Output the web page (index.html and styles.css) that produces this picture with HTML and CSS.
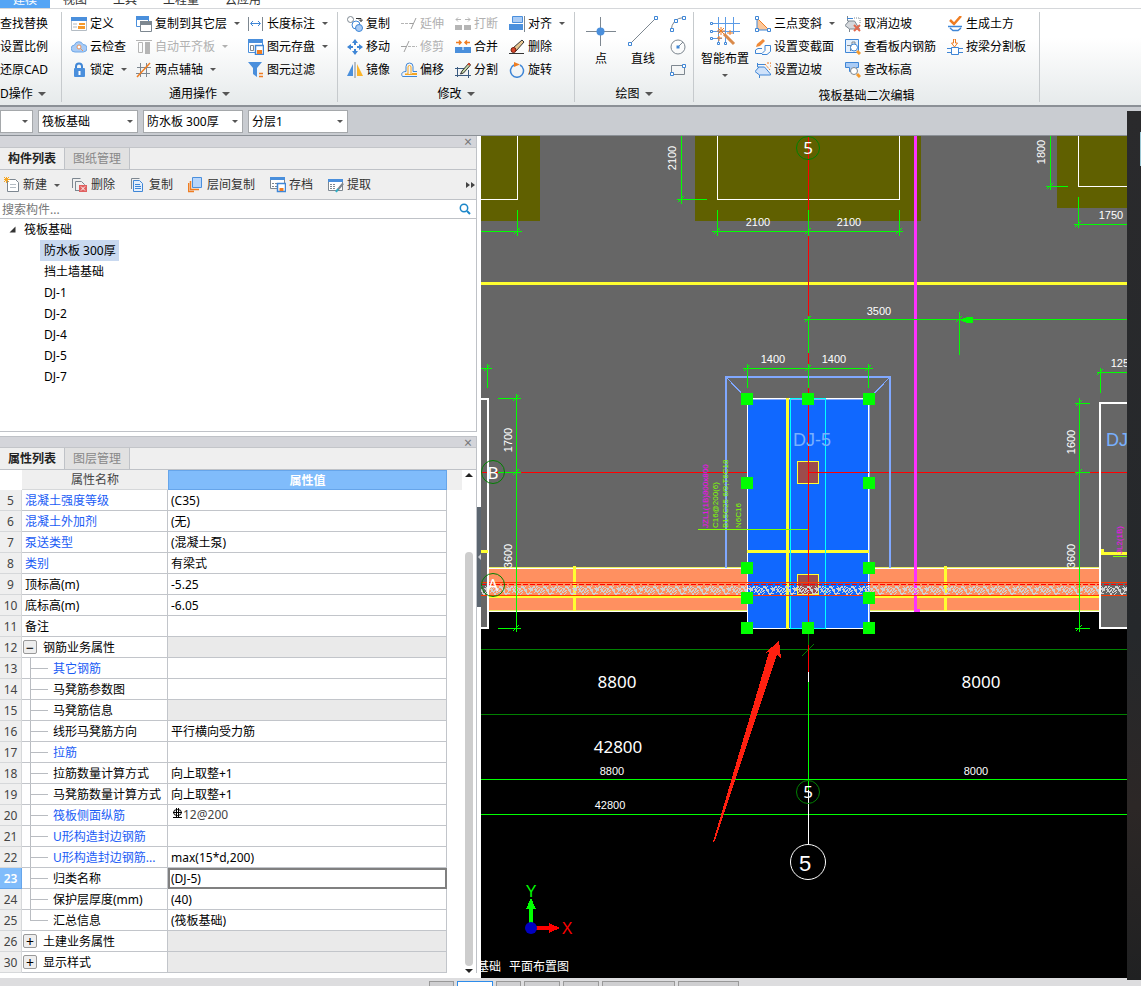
FILE: index.html
```html
<!DOCTYPE html>
<html lang="zh-CN">
<head>
  <meta charset="UTF-8">
  <title>筏板基础 - 建模</title>
  <link rel="stylesheet" href="styles.css">
</head>
<body>

<nav class="menu">
  <a href="#" class="active">建模</a>
  <a href="#">视图</a>
  <a href="#">工具</a>
  <a href="#">工程量</a>
  <a href="#">云应用</a>
</nav>

<header class="ribbon">
  <section class="group cut">
    <div class="tools">
      <div class="col">
        <button>查找替换</button>
        <button>设置比例</button>
        <button>还原CAD</button>
      </div>
    </div>
    <button class="group-name">D操作<i class="caret big"></i></button>
  </section>

  <section class="group common">
    <div class="tools">
      <div class="col">
        <button><svg class="icon" viewBox="0 0 16 16"><path d="M.5 1.500h15v13h-15z" fill="#fff" stroke="#b4bcc4"/><path d="M0 1h16v4H0z" fill="#4a8fdc"/><path d="M2 8h4M2 11h4" stroke="#b0b8c0"/><path d="M8 7h6v2H8zM7 10h7v3H7z" fill="#f59a2c"/></svg>定义</button>
        <button><svg class="icon" viewBox="0 0 16 16"><path d="M4 13a3.500 3.500 0 0 1-.5-7A4.500 4.500 0 0 1 12 5.500 3.700 3.700 0 0 1 12.500 13z" fill="#a9cbf5" stroke="#6fa8e8"/><circle cx="8" cy="8" r="2" fill="#fff" stroke="#e8925b"/><path d="M9.500 9.500l2.500 2.500" stroke="#e8925b"/></svg>云检查</button>
        <button><svg class="icon" viewBox="0 0 16 16"><path d="M5 7V4.500a3 3 0 0 1 6 0V7" fill="none" stroke="#3f86d6" stroke-width="2"/><rect x="3" y="6" width="11" height="9" rx="1" fill="#4a8fdc"/><path d="M8.500 9v4" stroke="#fff" stroke-width="2"/></svg>锁定<i class="caret"></i></button>
      </div>
      <div class="col">
        <button><svg class="icon" viewBox="0 0 16 16"><path d="M.5 1.500h12v9H.5z" fill="#fff" stroke="#4a8fdc"/><path d="M0 0h13v4H0z" fill="#4a8fdc"/><path d="M4.500 6.500h11v9h-11z" fill="#fff" stroke="#7d8790"/><path d="M4 5h12v4H4z" fill="#7d8790"/></svg>复制到其它层<i class="caret"></i></button>
        <button disabled><svg class="icon" viewBox="0 0 16 16"><path d="M0 1.500h16" stroke="#b5b5b5"/><path d="M2.500 3.500h4v10h-4z" fill="none" stroke="#b5b5b5"/><path d="M9 3h5v12H9z" fill="#b5b5b5"/></svg>自动平齐板<i class="caret"></i></button>
        <button><svg class="icon" viewBox="0 0 16 16"><path d="M4.500 1v14M10.500 1v14M1 5.500h14M0 11.500h14" stroke="#7d8790"/><path d="M1 15L14 1" stroke="#ef7d22" stroke-width="1.500"/></svg>两点辅轴<i class="caret"></i></button>
      </div>
      <div class="col">
        <button><svg class="icon" viewBox="0 0 16 16"><path d="M.5 1v14M14.500 1v14" stroke="#7d8790"/><path d="M3 7.500h9M5 5L2.500 7.500 5 10M10 5l2.500 2.500L10 10" fill="none" stroke="#3f86d6"/></svg>长度标注<i class="caret"></i></button>
        <button><svg class="icon" viewBox="0 0 16 16"><path d="M.5 1.500h14v12H.5z" fill="#fff" stroke="#4a8fdc"/><path d="M0 0h15v4H0z" fill="#4a8fdc"/><path d="M2.500 6.500h3v5h-3z" fill="none" stroke="#7d8790"/><path d="M7.500 6.500h8v9h-8z" fill="#fff" stroke="#3f86d6" stroke-width="1.500"/><path d="M9 11h5v4H9z" fill="#ef7d22"/></svg>图元存盘<i class="caret"></i></button>
        <button><svg class="icon" viewBox="0 0 16 16"><path d="M0 0h14L9 6v9l-4-3V6z" fill="#4a8fdc"/><path d="M11 11.500h4M11 14.500h4" stroke="#ef7d22" stroke-width="1.500"/></svg>图元过滤</button>
      </div>
    </div>
    <button class="group-name">通用操作<i class="caret big"></i></button>
  </section>

  <section class="group modify">
    <div class="tools">
      <div class="col">
        <button><svg class="icon" viewBox="0 0 16 16"><circle cx="3.500" cy="3.500" r="3" fill="none" stroke="#7d8790"/><circle cx="9" cy="9" r="4" fill="#fff" stroke="#3f86d6"/><circle cx="12" cy="12" r="3.500" fill="#a9cbf5" stroke="#3f86d6"/><path d="M9 2.500h5v3M12 3.500l2 2 2-2" fill="none" stroke="#333"/></svg>复制</button>
        <button><svg class="icon" viewBox="0 0 16 16"><path d="M8 0l3 4H9v2H7V4H5zM8 16l3-4H9v-2H7v2H5zM0 8l4-3v2h2v2H4v2zM16 8l-4-3v2h-2v2h2v2z" fill="#3f86d6"/></svg>移动</button>
        <button><svg class="icon" viewBox="0 0 16 16"><path d="M6 2v12H0z" fill="#4a8fdc"/><path d="M10 2v12h6z" fill="#fbb52a"/><path d="M8 0v16" stroke="#7d8790"/></svg>镜像</button>
      </div>
      <div class="col">
        <button disabled><svg class="icon" viewBox="0 0 16 16"><path d="M0 7.500h9" stroke="#b5b5b5" stroke-dasharray="3 1"/><path d="M9 7.500h3M10 13l5-11" stroke="#a0a0a0"/></svg>延伸</button>
        <button disabled><svg class="icon" viewBox="0 0 16 16"><path d="M0 7.500h5M3 13L8 2" stroke="#a0a0a0"/><path d="M7 7.500h9" stroke="#b5b5b5" stroke-dasharray="3 1"/></svg>修剪</button>
        <button><svg class="icon" viewBox="0 0 16 16"><path d="M16 14.500H1.500c-2-3 0-5 3.500-5v-5a3.500 3.500 0 0 1 7 0v5h4" fill="none" stroke="#3f86d6"/><path d="M16 12.500H4M16 11.500h-5M4 12h3V5a1.500 1.500 0 0 1 3 0v7" fill="none" stroke="#f5a623"/></svg>偏移</button>
      </div>
      <div class="col">
        <button disabled><svg class="icon" viewBox="0 0 16 16"><path d="M0 9h7v5H0zM9 9h7v5H9z" fill="#b5b5b5"/><path d="M1 3.500h5M3 1.500l-2 2 2 2M10 3.500h5M13 1.500l2 2-2 2" fill="none" stroke="#b5b5b5"/></svg>打断</button>
        <button><svg class="icon" viewBox="0 0 16 16"><path d="M0 8h16v6H0z" fill="#4a8fdc"/><path d="M8 8v3" stroke="#fff"/><path d="M1 3.500h5M4 1.500l2 2-2 2M15 3.500h-5M12 1.500l-2 2 2 2" fill="none" stroke="#ef7d22" stroke-width="1.500"/></svg>合并</button>
        <button><svg class="icon" viewBox="0 0 16 16"><path d="M0 6.500h10M2.500 5v10M0 13.500h16M13.500 8v8" fill="none" stroke="#3b5b80"/><path d="M14 1l1.500 2-7 8-3 1 1.500-3z" fill="#c5d9a8" stroke="#333"/><path d="M13 1.500L15 3" stroke="#d9482b" stroke-width="2"/></svg>分割</button>
      </div>
      <div class="col">
        <button><svg class="icon" viewBox="0 0 16 16"><path d="M3.500.500h10v6h-10z" fill="#a9cbf5" stroke="#4a8fdc"/><path d="M0 8h14v6H0z" fill="#4a8fdc"/><path d="M15.500 0v16" stroke="#7d8790"/></svg>对齐<i class="caret"></i></button>
        <button><svg class="icon" viewBox="0 0 16 16"><path d="M0 14.500h15" stroke="#333"/><path d="M13 1l2 2-8 9-3-3z" fill="#e8c690" stroke="#333"/><circle cx="4.500" cy="11" r="2.500" fill="#d9482b" stroke="#702010"/></svg>删除</button>
        <button><svg class="icon" viewBox="0 0 16 16"><path d="M5 3a6.500 6.500 0 1 0 6 0" fill="none" stroke="#3f86d6" stroke-width="1.500"/><path d="M5 0l6 2.500L5 5z" fill="#ef7d22"/></svg>旋转</button>
      </div>
    </div>
    <button class="group-name">修改<i class="caret big"></i></button>
  </section>

  <section class="group draw">
    <div class="tools">
      <button class="large"><svg class="icon-lg" viewBox="0 0 30 30"><path d="M14.500 1v29M0 15.500h30" stroke="#7d8790"/><circle cx="14.500" cy="15.500" r="4" fill="#4a8fdc"/></svg>点</button>
      <button class="large"><svg class="icon-lg" viewBox="0 0 30 30"><path d="M2 28L28 2" stroke="#7d8790"/><path d="M.500 26.500h3v3h-3zM26.500.500h3v3h-3z" fill="#fff" stroke="#3f86d6"/></svg>直线</button>
      <div class="col">
        <button aria-label="弧"><svg class="icon" viewBox="0 0 16 16"><path d="M1 15Q2 2 14 1.500" fill="none" stroke="#7d8790"/><path d="M.500 12.500h3v3h-3zM4.500 3.500h3v3h-3zM12.500.500h3v3h-3z" fill="#fff" stroke="#3f86d6"/></svg></button>
        <button aria-label="圆"><svg class="icon" viewBox="0 0 16 16"><circle cx="8" cy="8" r="7" fill="none" stroke="#7d8790"/><path d="M8 8l5-5" stroke="#7d8790"/><path d="M6.500 6.500h3v3h-3z" fill="#3f86d6"/></svg></button>
        <button aria-label="矩形"><svg class="icon" viewBox="0 0 16 16"><path d="M1.500 3.500h13v9h-13z" fill="none" stroke="#7d8790"/><path d="M.500 10.500h3v3h-3zM12.500 2.500h3v3h-3z" fill="#fff" stroke="#3f86d6"/></svg></button>
      </div>
    </div>
    <button class="group-name">绘图<i class="caret big"></i></button>
  </section>

  <section class="group raft">
    <div class="tools">
      <button class="large"><svg class="icon-lg" viewBox="0 0 30 30"><path d="M8.500 1v26M15.500 1v26M23.500 1v17M2 7.500h28M2 15.500h28M2 22.500h10" stroke="#5b9be6"/><path d="M.500 6.500h2v2h-2zM.500 14.500h2v2h-2zM.500 21.500h2v2h-2zM7.500 26.500h2v2h-2zM14.500 26.500h2v2h-2z" fill="#fff" stroke="#3f86d6"/><path d="M14 18l10 10" stroke="#d98a4a" stroke-width="3"/><path d="M11 11v8M7 15h8M8 12l6 6M14 12l-6 6M20 14v5M17 17h6M9 20v5M7 22h5" stroke="#ef7d22"/></svg>智能布置<i class="caret"></i></button>
      <div class="col">
        <button><svg class="icon" viewBox="0 0 16 16"><path d="M2 2v12h12z" fill="#fbc79a"/><path d="M2 2v12h12" fill="none" stroke="#3f86d6"/><path d="M2 2l12 12" stroke="#ef7d22"/><path d="M.500.500h3v3h-3zM.500 12.500h3v3h-3zM12.500 12.500h3v3h-3z" fill="#fff" stroke="#3f86d6"/></svg>三点变斜<i class="caret"></i></button>
        <button><svg class="icon" viewBox="0 0 16 16"><path d="M7 9.500H3L.500 11v3.500H7l3-3V6.500h5.500v6L12 15.500H7" fill="none" stroke="#3f86d6"/><path d="M1 8l1-3 6-5 2 2-5 5z" fill="#f08a38"/></svg>设置变截面</button>
        <button><svg class="icon" viewBox="0 0 16 16"><path d="M2.500 1v4h7l6 7v1h-11v3M4.500 13L0 9.500l4-4.500" fill="#cfe2fa" stroke="#3f86d6"/><path d="M2 2.500h8" stroke="#3f86d6"/><path d="M10 2l5 6M12 1h4v4" fill="none" stroke="#ef7d22" stroke-dasharray="2 1"/></svg>设置边坡</button>
      </div>
      <div class="col">
        <button><svg class="icon" viewBox="0 0 16 16"><path d="M2.500 0v5h7l5 8h-10v3M4.500 13L0 9.500l4-4.500" fill="#d5d8dc" stroke="#7d8790"/><path d="M2 2.500h6" stroke="#3f86d6"/><path d="M9 2h6v6" fill="none" stroke="#7d8790" stroke-dasharray="1 1"/><path d="M9 9l6 6M15 9l-6 6" stroke="#e0694e" stroke-width="2"/></svg>取消边坡</button>
        <button><svg class="icon" viewBox="0 0 16 16"><path d="M.500.500h13v13H.500z" fill="#e4effc" stroke="#3f86d6"/><path d="M2 6.500h5V3h3v2M5.500 6v6" fill="none" stroke="#7d8790"/><circle cx="9" cy="8.500" r="3.500" fill="#fff" stroke="#3f86d6"/><path d="M12 12l3 3" stroke="#f59a2c" stroke-width="3"/></svg>查看板内钢筋</button>
        <button><svg class="icon" viewBox="0 0 16 16"><path d="M.500.500h13v5h-2v4h-7v-4h-4z" fill="#a9cbf5" stroke="#3f86d6"/><circle cx="9" cy="9" r="3.500" fill="#fff" stroke="#7d8790"/><path d="M12 12l3 3" stroke="#f59a2c" stroke-width="3"/></svg>查改标高</button>
      </div>
      <div class="col">
        <button><svg class="icon" viewBox="0 0 16 16"><path d="M3 4l4 4 7-8" fill="none" stroke="#ef7d22" stroke-width="2.500"/><path d="M1 10.500h14M3 12l3 2.500h5l3-2.500" fill="none" stroke="#3f86d6" stroke-width="1.500"/></svg>生成土方</button>
        <button><svg class="icon" viewBox="0 0 16 16"><path d="M6.500 0h2v4h2l-3 4-3-4h2z" fill="#fff" stroke="#ef7d22"/><path d="M0 9.500h5M11 9.500h5M0 13.500h5M11 13.500h5M4.500 8.500h7v7h-7z" fill="#fff" stroke="#3f86d6"/></svg>按梁分割板</button>
      </div>
    </div>
    <span class="group-name">筏板基础二次编辑</span>
  </section>
</header>

<div class="selectors">
  <span class="combo first"><select aria-label="楼层"><option></option></select></span>
  <span class="combo"><select aria-label="构件类型"><option>筏板基础</option></select></span>
  <span class="combo"><select aria-label="构件"><option>防水板 300厚</option></select></span>
  <span class="combo"><select aria-label="分层"><option>分层1</option></select></span>
</div>

<main class="workspace">
  <aside class="side">
    <section class="panel components">
      <div class="panel-title"><button aria-label="关闭">×</button></div>
      <div class="panel-tabs"><button class="active">构件列表</button><button>图纸管理</button></div>
      <div class="panel-tools">
        <button><svg class="icon" viewBox="0 0 16 16"><path d="M3.500 2.500h8l3 3v9h-11z" fill="#fff" stroke="#7d8790"/><path d="M6 7.500h6M6 10.500h6" stroke="#b4bcc4"/><path d="M0 0l5 5M5 0L0 5M2.500 0v6M0 2.500h6" stroke="#f5a623"/></svg>新建<i class="caret"></i></button>
        <button><svg class="icon" viewBox="0 0 16 16"><path d="M.500 11V1.500h8M3.500 14V4.500h6l3 3v6h-9" fill="none" stroke="#7d8790"/><path d="M7 8h8v7H7z" fill="#e06060"/><path d="M9 9.500l4 4M13 9.500l-4 4" stroke="#fff"/></svg>删除</button>
        <button><svg class="icon" viewBox="0 0 16 16"><path d="M1.500 12V1.500h8" fill="none" stroke="#7d8790"/><path d="M3.500 3.500h6l3 3v8h-9z" fill="#e4effc" stroke="#3f86d6"/><path d="M5 7.500h5M5 9.500h6M5 11.500h6" stroke="#3f86d6"/></svg>复制</button>
        <button><svg class="icon" viewBox="0 0 16 16"><path d="M4.500.500h9v10h-9z" fill="#b8d6fb" stroke="#4a8fdc"/><path d="M2.500 4v8.500H11M.500 6v8.500H6" fill="none" stroke="#ef7d22" stroke-width="1.500"/></svg>层间复制</button>
        <button><svg class="icon" viewBox="0 0 16 16"><path d="M.500 1.500h14v10H.500z" fill="#fff" stroke="#7d8790"/><path d="M0 0h15v3H0z" fill="#4a8fdc"/><path d="M2 6.500h6M2 9.500h5" stroke="#7d8790" stroke-dasharray="2 1"/><path d="M7.500 6.500h8v8h-8z" fill="#fff" stroke="#3f86d6" stroke-width="1.500"/><path d="M9.500 11h4v3h-4z" fill="#ef7d22"/></svg>存档</button>
        <button><svg class="icon" viewBox="0 0 16 16"><path d="M.500 2.500h14v11H.500z" fill="#fff" stroke="#7d8790"/><path d="M0 2h15v3H0z" fill="#4a8fdc"/><path d="M2 7.500h6M2 9.500h6M2 11.500h5" stroke="#7d8790" stroke-dasharray="2 1"/><path d="M14 6l2 1-5 6-3 2 1-3z" fill="#7d8790"/><path d="M8 15l2-3" stroke="#2bb0c8" stroke-width="2"/></svg>提取</button>
        <button class="more" aria-label="更多"><svg width="9" height="8" viewBox="0 0 9 8"><path d="M0 1l4 3-4 3zM5 1l4 3-4 3z" fill="#444"/></svg></button>
      </div>
      <div class="search">
        <input type="text" placeholder="搜索构件..." aria-label="搜索构件">
        <svg width="12" height="12" viewBox="0 0 12 12"><circle cx="5" cy="5" r="3.700" fill="none" stroke="#1b86c8" stroke-width="1.500"/><path d="M8 8l3 3" stroke="#1b86c8" stroke-width="2"/></svg>
      </div>
      <ul class="tree">
        <li><span class="root"><svg width="7" height="7" viewBox="0 0 7 7"><path d="M6.500.500v6h-6z" fill="#333"/></svg>筏板基础</span>
          <ul>
            <li><span class="selected">防水板 300厚</span></li>
            <li><span>挡土墙基础</span></li>
            <li><span>DJ-1</span></li>
            <li><span>DJ-2</span></li>
            <li><span>DJ-4</span></li>
            <li><span>DJ-5</span></li>
            <li><span>DJ-7</span></li>
          </ul>
        </li>
      </ul>
    </section>

    <section class="panel props">
      <div class="panel-title"><button aria-label="关闭">×</button></div>
      <div class="panel-tabs"><button class="active">属性列表</button><button>图层管理</button></div>
      <div class="props-body">
        <table>
          <colgroup><col class="c-num"><col class="c-name"><col></colgroup>
          <thead>
            <tr><th></th><th>属性名称</th><th class="current">属性值</th></tr>
          </thead>
          <tbody>
            <tr><th>5</th><td class="blue">混凝土强度等级</td><td>(C35)</td></tr>
            <tr><th>6</th><td class="blue">混凝土外加剂</td><td>(无)</td></tr>
            <tr><th>7</th><td class="blue">泵送类型</td><td>(混凝土泵)</td></tr>
            <tr><th>8</th><td class="blue">类别</td><td>有梁式</td></tr>
            <tr><th>9</th><td>顶标高(m)</td><td>-5.25</td></tr>
            <tr><th>10</th><td>底标高(m)</td><td>-6.05</td></tr>
            <tr><th>11</th><td>备注</td><td></td></tr>
            <tr><th>12</th><td class="head"><button class="fold">−</button>钢筋业务属性</td><td class="off"></td></tr>
            <tr><th>13</th><td class="child blue">其它钢筋</td><td></td></tr>
            <tr><th>14</th><td class="child">马凳筋参数图</td><td></td></tr>
            <tr><th>15</th><td class="child">马凳筋信息</td><td class="off"></td></tr>
            <tr><th>16</th><td class="child">线形马凳筋方向</td><td>平行横向受力筋</td></tr>
            <tr><th>17</th><td class="child blue">拉筋</td><td></td></tr>
            <tr><th>18</th><td class="child">拉筋数量计算方式</td><td>向上取整+1</td></tr>
            <tr><th>19</th><td class="child">马凳筋数量计算方式</td><td>向上取整+1</td></tr>
            <tr><th>20</th><td class="child blue">筏板侧面纵筋</td><td class="rebar"><svg width="11" height="11" viewBox="0 0 11 11"><ellipse cx="5.500" cy="4.500" rx="4" ry="3" fill="none" stroke="#000"/><path d="M4.500 0v10M6.500 0v10M1 9.500h9M1 4.500h9" stroke="#000"/></svg>12@200</td></tr>
            <tr><th>21</th><td class="child blue">U形构造封边钢筋</td><td></td></tr>
            <tr><th>22</th><td class="child blue">U形构造封边钢筋...</td><td>max(15*d,200)</td></tr>
            <tr class="current"><th>23</th><td class="child">归类名称</td><td class="edit"><input type="text" value="(DJ-5)" aria-label="归类名称"></td></tr>
            <tr><th>24</th><td class="child">保护层厚度(mm)</td><td>(40)</td></tr>
            <tr><th>25</th><td class="child last">汇总信息</td><td>(筏板基础)</td></tr>
            <tr><th>26</th><td class="head"><button class="fold">+</button>土建业务属性</td><td class="off"></td></tr>
            <tr><th>30</th><td class="head"><button class="fold">+</button>显示样式</td><td class="off"></td></tr>
          </tbody>
        </table>
        <div class="scroll"><i class="up"></i><i class="thumb"></i><i class="down"></i></div>
      </div>
    </section>
  </aside>

  <div class="splitter"><button aria-label="收起"></button></div>

  <div class="canvas">
    <svg class="drawing">
      <defs>
        <pattern id="concrete" width="22" height="10" patternUnits="userSpaceOnUse" y="585">
          <path d="M0 10L6 1l5 9 5-9 6 9M1 1l4 5M8 1l6 3M10 7l3-4M17 1l4 6M2 6l3-2M13 8l4-3M18 4h3M6 8l4-5M0 3l3 2M14 10l3-3M1 8h3M9 2l-3 3M20 1l-3 3" fill="none" stroke="#d0d0d0"/>
        </pattern>
      </defs>
      <g transform="translate(-481 -136)">
        <rect x="481" y="136" width="3000" height="475" fill="#666"/>

        <!-- footings -->
        <path d="M481 136h59v85h-59zM695 136h226v85H695zM1057 136h240v72h-240z" fill="#606000"/>
        <path d="M481 199.500h36.500V136M717.500 136v63.500h182V136M1078.500 136v50.500h200" class="white"/>

        <!-- trench boundary and axes -->
        <path d="M481 283.500h3000" class="yellow w3"/>
        <path d="M808.500 136v500M481 472.500h3000" class="red"/>
        <path d="M481 568h7v60h-7zM1100 568h180v60h-180z" fill="#666"/>

        <!-- strip foundation -->
        <path d="M488 568h259v43H488zM869 568h231v43H869z" fill="#ff9060"/>
        <path d="M488 567.500h259M869 567.500h231M488 610.500h259M869 610.500h231" stroke="#e8f060"/>
        <path d="M488 568.500h259M869 568.500h231M488 611.500h259M869 611.500h231" class="white"/>
        <path d="M574.500 566v45M945.500 566v45" class="yellow w3"/>
        <path d="M488 597h259M869 597h231" class="yellow w2"/>

        <!-- pit slope -->
        <path d="M726 568V377h164v191" class="slope w2"/>
        <path d="M726 377l21 22M890 377l-21 22" class="slope w1"/>
        <path d="M914 136h3v475h-3z" fill="#ff30ff"/>
        <path d="M914 609h6v3h-6z" fill="#ff30ff"/>

        <!-- selected footing -->
        <path d="M747.500 398.500h121v230h-121z" fill="#1068ff" stroke="#fff"/>
        <path d="M749 399.500h119M869.500 399v229" class="slope w1"/>
        <path d="M787.500 398v231M747 551.500h122" class="yellow w3"/>
        <path d="M790.500 398.500h35v230h-35z" class="cyan"/>
        <path d="M797.500 461.500h21v22h-21zM797.500 574.500h21v20h-21z" fill="#9c4c4c" stroke="#ff3"/>
        <path d="M808.500 399v237M808 472.500h61" class="red"/>

        <rect x="481" y="585" width="3000" height="10" fill="url(#concrete)"/>
        <path d="M481 582.500h3000M481 595.500h3000" stroke="#ff3800"/>
        <path d="M481 584.500h3000" class="red" stroke-dasharray="5 2"/>

        <!-- side footings -->
        <path d="M481 399h7v229h-7M1280 403h-180v225h180" class="white w2"/>
        <path d="M481 551.500h7M1101 553.500h170M1102 549v6" class="yellow w3"/>

        <!-- dimensions -->
        <path class="green" d="M481 231.500h41M517.500 210v26M681.500 136v68M677 199.500h30M712 231.500h191M717.500 210v26M808.500 210v26M899.500 210v26M1050.500 136v54M1046 186.500h22M1078.500 197v31M1074 224.500h200M804 319.500h2600M808.500 316v37M959.500 312v43M743 368.500h130M747.500 364v24M808.500 364v24M868.500 364v24M481 368.500h11M487.500 364v24M1097 372.500h200M1100.500 368v25M516.500 394v238M498 398.500h23M498 472.500h23M498 628.500h23M1079.500 398v234M1075 403.500h15M1075 472.500h15M1075 628.500h15"/>
        <path class="green" d="M514 234l6-6M678 202l6-6M714 234l6-6M805 234l6-6M896 234l6-6M1047 189l6-6M1075 227l6-6M805 322l6-6M956 322l6-6M744 371l6-6M805 371l6-6M865 371l6-6M484 371l6-6M1097 375l6-6M513 401l6-6M513 475l6-6M513 631l6-6M1076 406l6-6M1076 475l6-6M1076 631l6-6"/>
        <path d="M960 320l7-3h6v6h-6z" fill="#0f0"/>
        <path d="M698 529.500h110M1113 556.500h160" stroke="#80ff00"/>

        <path class="grips" d="M741 393h12v12h-12zM802 393h12v12h-12zM863 393h12v12h-12zM741 477h12v12h-12zM863 477h12v12h-12zM741 562h12v12h-12zM863 562h12v12h-12zM741 592h12v12h-12zM863 592h12v12h-12zM741 622h12v12h-12zM802 622h12v12h-12zM863 622h12v12h-12z"/>

        <g class="dim">
          <text x="758" y="226">2100</text>
          <text x="849" y="226">2100</text>
          <text x="1111" y="219">1750</text>
          <text x="879" y="315">3500</text>
          <text x="773" y="363">1400</text>
          <text x="834" y="363">1400</text>
          <text x="1123" y="367">1250</text>
          <text x="612" y="775">8800</text>
          <text x="976" y="775">8000</text>
          <text x="610" y="809">42800</text>
          <text transform="translate(676 158) rotate(-90)">2100</text>
          <text transform="translate(1045 152) rotate(-90)">1800</text>
          <text transform="translate(512 440) rotate(-90)">1700</text>
          <text transform="translate(512 556) rotate(-90)">3600</text>
          <text transform="translate(1075 442) rotate(-90)">1600</text>
          <text transform="translate(1075 556) rotate(-90)">3600</text>
        </g>
        <g class="note">
          <text transform="translate(708 528) rotate(-90)" class="mag">JZL1(1B)800x800</text>
          <text transform="translate(718 528) rotate(-90)">C16@200(6)</text>
          <text transform="translate(728 528) rotate(-90)">B15C25 6/9;T6C18</text>
          <text transform="translate(741 528) rotate(-90)">N6C16</text>
          <text transform="translate(1122 554) rotate(-90)" class="mag">JL2(1B)</text>
        </g>
        <text x="793" y="446" class="mark">DJ-5</text>
        <text x="1106" y="446" class="mark">DJ-5</text>

        <!-- overall dimensions below the plan -->
        <path d="M481 649.500h3000M481 714.500h3000M808.500 634v12M802 656l12-12" stroke="#008000"/>
        <path d="M481 779.500h3000M481 814.500h3000M808.500 682v108" class="green"/>
        <path d="M808.500 645v27" class="red"/>
        <path d="M808.500 672v10M808.500 790v54" class="white"/>
        <g class="total">
          <text x="617" y="688">8800</text>
          <text x="981" y="688">8000</text>
          <text x="618" y="753">42800</text>
        </g>

        <g class="axis">
          <circle cx="808" cy="148" r="11.500"/>
          <circle cx="493" cy="472" r="11.500"/>
          <circle cx="493" cy="585" r="11.500"/>
          <circle cx="808" cy="792" r="11.500"/>
          <circle cx="808" cy="862" r="17.500" class="outer"/>
          <text x="808" y="154">5</text>
          <text x="493" y="479">B</text>
          <text x="493" y="591">A</text>
          <text x="808" y="798">5</text>
          <text x="805" y="871" class="thin">5</text>
        </g>

        <path d="M779 641l-14 12 4-1-56 190 1 1 63-188 4 3z" fill="#ff2010"/>

        <path d="M529 909h4v14h-4zM526 909l5-11 5 11z" fill="#0f0"/>
        <path d="M536 926h13v4h-13zM549 923l11 5-11 5z" fill="#f00"/>
        <circle cx="531" cy="928" r="6" fill="#0000c0"/>
        <text x="531" y="897" class="ucs y">Y</text>
        <text x="567" y="934" class="ucs x">X</text>
        <g class="caption">
          <text x="501" y="971">基础</text>
          <text x="569" y="971">平面布置图</text>
        </g>
      </g>
    </svg>
  </div>
</main>

<footer class="status">
  <button class="s"></button>
  <button class="m on"></button>
  <button class="s"></button>
  <button class="m"></button>
  <button class="m"></button>
  <button class="l"></button>
  <button class="k"></button>
</footer>

<div class="edge"></div>

</body>
</html>
```

FILE: styles.css
```css
* {
  box-sizing: border-box;
}
body {
  margin: 0;
  min-height: 100vh;
  display: flex;
  flex-direction: column;
  position: relative;
  overflow-x: hidden;
  font: 12px/16px "Noto Sans", "Noto Sans CJK SC", sans-serif;
  color: #000;
  background: #fff;
}
button, input, select {
  font: inherit;
  color: inherit;
  margin: 0;
  padding: 0;
  border: 0;
  background: none;
  white-space: nowrap;
}
ul {
  list-style: none;
  margin: 0;
  padding: 0;
}

/* menu */
.menu {
  display: flex;
  align-items: flex-end;
  height: 8px;
  overflow: hidden;
}
.menu a {
  padding: 0 13px;
  color: #333;
  text-decoration: none;
}
.menu .active {
  background: #55a5f5;
  color: #fff;
}

/* ribbon */
.ribbon {
  display: flex;
  height: 99px;
  padding: 3px 0;
  border-top: 1px solid #d5d7da;
  border-bottom: 2px solid #8b9096;
  background: linear-gradient(#fff 30%, #e6eaeb);
}
.group {
  display: flex;
  flex-direction: column;
  align-items: center;
  border-right: 1px solid #c6cacd;
}
.tools {
  display: flex;
  align-self: stretch;
  gap: 10px;
}
.col {
  display: flex;
  flex-direction: column;
}
.col button {
  display: flex;
  align-items: center;
  gap: 3px;
  height: 23px;
}
.col button:disabled {
  color: #b0b0b0;
}
.icon {
  width: 16px;
  height: 16px;
  flex: none;
}
.icon-lg {
  width: 30px;
  height: 30px;
}
.large {
  display: flex;
  flex-direction: column;
  align-items: center;
  align-self: flex-start;
  padding-top: 4px;
  gap: 5px;
}
.caret {
  width: 0;
  height: 0;
  border: 3px solid transparent;
  border-top-color: #555;
  border-bottom: 0;
}
.col .caret {
  margin: 0 -2px 0 4px;
}
.large .caret {
  margin-top: 2px;
}
.caret.big {
  display: inline-block;
  border-width: 4px 4px 0;
  margin-left: 5px;
  vertical-align: 2px;
}
:disabled .caret {
  border-top-color: #b0b0b0;
}
.group-name {
  padding-top: 5px;
}
.cut {
  width: 62px;
  align-items: flex-start;
}
.common {
  width: 276px;
}
.common .tools {
  padding-left: 9px;
}
.modify {
  width: 237px;
}
.modify .tools {
  padding-left: 9px;
  gap: 11px;
}
.draw {
  width: 119px;
}
.draw .tools {
  padding-left: 11px;
  gap: 12px;
}
.raft {
  width: 346px;
}
.raft .tools {
  padding-left: 7px;
  gap: 11px;
}
.raft .large + .col {
  margin-left: -5px;
}
.raft .group-name {
  padding-top: 7px;
}

/* selectors under the ribbon */
.selectors {
  display: flex;
  gap: 5px;
  height: 29px;
  padding: 3px 0;
  border-bottom: 1px solid #8b9096;
  background: #c9ccd1;
}
.combo {
  position: relative;
  width: 100px;
}
.combo.first {
  width: 33px;
}
.combo select {
  appearance: none;
  width: 100%;
  height: 23px;
  padding: 0 14px 0 3px;
  border: 1px solid #a5a8ab;
  border-radius: 0;
  background: #fff;
}
.combo::after {
  content: "";
  position: absolute;
  right: 5px;
  top: 10px;
  border: 3px solid transparent;
  border-top-color: #555;
  border-bottom: 0;
}

/* workspace */
.workspace {
  flex: 1;
  display: flex;
}
.side {
  width: 477px;
  flex: none;
  display: flex;
  flex-direction: column;
  gap: 4px;
}
.panel {
  border-right: 1px solid #bfc2c7;
}
.components {
  min-height: 296px;
  border-bottom: 1px solid #bfc2c7;
}
.panel-title {
  display: flex;
  justify-content: flex-end;
  height: 12px;
  padding-right: 4px;
  border-bottom: 1px solid #c3c5c9;
  background: #d4d5da;
}
.panel-title button {
  line-height: 11px;
  font-size: 14px;
  color: #777;
}
.props .panel-title {
  border-top: 1px solid #bfc2c7;
}
.panel-tabs {
  display: flex;
  height: 22px;
  border-bottom: 1px solid #bfc2c7;
  background: #efefef;
}
.panel-tabs button {
  padding: 0 8px;
  border-right: 1px solid #bfc2c7;
  background: #e1e1e1;
  color: #888;
}
.panel-tabs .active {
  background: #efefef;
  color: #222;
  font-weight: 600;
}
.panel-tools {
  display: flex;
  align-items: center;
  gap: 15px;
  height: 30px;
  padding: 0 1px 0 4px;
  border-bottom: 1px solid #bfc2c7;
  background: #efefef;
  color: #333;
}
.panel-tools button {
  display: flex;
  align-items: center;
  gap: 3px;
}
.panel-tools .caret {
  margin: 2px -3px 0 4px;
}
.panel-tools .more {
  margin-left: auto;
}
.search {
  display: flex;
  align-items: center;
  height: 19px;
  padding: 0 5px 0 2px;
  border-bottom: 1px solid #bfc2c7;
}
.search input {
  flex: 1;
  padding-top: 2px;
  outline: 0;
}
.search input::placeholder {
  color: #777;
}
.tree span {
  display: inline-block;
  vertical-align: top;
  height: 21px;
  line-height: 21px;
  padding: 0 3px 0 4px;
}
.tree .root {
  display: flex;
  align-items: center;
  gap: 8px;
  padding-left: 9px;
}
.tree ul {
  padding-left: 40px;
}
.tree li li {
  height: 21px;
}
.tree .selected {
  background: #c9d9f0;
}

/* property table */
.props-body {
  display: flex;
}
.props table {
  flex: 1;
  table-layout: fixed;
  border-spacing: 0;
}
.c-num {
  width: 22px;
}
.c-name {
  width: 146px;
}
.props th {
  height: 21px;
  padding: 2px 0 0;
  font-weight: normal;
  background: #efefef;
  color: #444;
  border-right: 1px solid #d6d8da;
  border-bottom: 1px solid #d6d8da;
}
.props thead th {
  height: 20px;
  padding-top: 1px;
  border-right: 0;
}
.props thead th:first-child {
  background: #fff;
  border-bottom: 0;
}
.props thead .current {
  background: #80bcfb;
  border: 1px solid #66a5ea;
  color: #fff;
  font-weight: 600;
}
.props td {
  height: 21px;
  padding: 2px 3px 0;
  white-space: nowrap;
  overflow: hidden;
  border-right: 1px solid #c2c5ca;
  border-bottom: 1px solid #c2c5ca;
}
.props .blue {
  color: #1a5cf5;
}
.props .off {
  background: #eaeaea;
}
.props .head {
  padding-left: 1px;
}
.fold {
  width: 14px;
  height: 14px;
  margin-right: 6px;
  border: 1px solid #999;
  border-radius: 2px;
  background: #eee;
  line-height: 11px;
  font-size: 14px;
  vertical-align: top;
}
.props .child {
  padding-left: 31px;
  background:
    linear-gradient(#b9bcc1, #b9bcc1) 8px 0 / 1px 100% no-repeat,
    linear-gradient(#b9bcc1, #b9bcc1) 8px 50% / 18px 1px no-repeat;
}
.props .last {
  background:
    linear-gradient(#b9bcc1, #b9bcc1) 8px 0 / 1px 50% no-repeat,
    linear-gradient(#b9bcc1, #b9bcc1) 8px 50% / 18px 1px no-repeat;
}
.props .rebar {
  padding: 0 4px;
  color: #444;
}
.props .current th {
  background: #80bcfb;
  border-color: #66a5ea;
  color: #fff;
  font-weight: 600;
}
.props .edit {
  padding: 0;
  border: 2px solid #808080;
}
.edit input {
  display: block;
  width: 100%;
  padding-left: 1px;
}
.scroll {
  width: 29px;
  flex: none;
  display: flex;
  flex-direction: column;
  align-items: center;
  padding: 3px 0 0 14px;
  background: linear-gradient(#efefef, #efefef) 0 0 / 15px 20px no-repeat;
}
.scroll .up, .scroll .down {
  border: 4px solid transparent;
  border-bottom-color: #222;
  border-top: 0;
}
.scroll .down {
  border-bottom: 0;
  border-top: 4px solid #222;
}
.scroll .thumb {
  flex: 1;
  width: 8px;
  margin: 75px 0 3px;
  border-radius: 4px;
  background: #cdcdcd;
}
.splitter {
  width: 4px;
  flex: none;
  display: flex;
  align-items: center;
}
.splitter button {
  width: 4px;
  height: 100px;
  background: #5c6670;
}
.splitter button::before {
  content: "";
  display: block;
  border: 3px solid transparent;
  border-right: 3px solid #c9ccd1;
  border-left: 0;
}

/* drawing */
.canvas {
  flex: 1;
  min-width: 0;
  display: flex;
  background: #000;
}
.drawing {
  flex: 1;
  min-width: 0;
  height: auto;
}
.drawing path {
  shape-rendering: crispEdges;
}
.white { fill: none; stroke: #fff; }
.red { fill: none; stroke: #f00; }
.green { fill: none; stroke: #0f0; }
.yellow { fill: none; stroke: #ffff30; }
.cyan { fill: none; stroke: #0ff; }
.slope { fill: none; stroke: #80a8ff; }
.w1 { stroke-width: 1; }
.w2 { stroke-width: 2; }
.w3 { stroke-width: 3; }
.grips { fill: #0f0; }
.dim {
  font: 11px "Liberation Sans", sans-serif;
  fill: #fff;
  text-anchor: middle;
}
.note {
  font: 8px "Liberation Sans", sans-serif;
  fill: #80ff00;
}
.note .mag {
  fill: #f0f;
}
.mark {
  font: 18px "Liberation Sans", sans-serif;
  fill: #78b0ff;
}
.total {
  font: 17px "Noto Sans", sans-serif;
  fill: #fff;
  text-anchor: middle;
}
.axis {
  font: 17px "Noto Sans", sans-serif;
  fill: #fff;
  text-anchor: middle;
}
.axis circle {
  fill: none;
  stroke: #008000;
}
.axis .outer {
  stroke: #fff;
}
.axis .thin {
  font: 22px "Liberation Sans", sans-serif;
}
.ucs {
  font: 16px "Liberation Sans", sans-serif;
  text-anchor: middle;
}
.ucs.x { fill: #f00; }
.ucs.y { fill: #0f0; }
.caption {
  font: 12px "Noto Sans CJK SC", sans-serif;
  fill: #fff;
  text-anchor: end;
}

/* bottom bar */
.status {
  display: flex;
  gap: 3px;
  height: 8px;
  padding: 3px 0 0 429px;
  overflow: hidden;
  background: #dddddf;
}
.status button {
  height: 20px;
  border: 1px solid #999;
  background: #cfcfd1;
}
.status .s { width: 25px; }
.status .m { width: 36px; }
.status .l { width: 73px; }
.status .k { width: 61px; }
.status .on {
  border-color: #2d8ceb;
  background: #fff;
}
.edge {
  position: absolute;
  top: 111px;
  right: 0;
  bottom: 6px;
  width: 14px;
  background:
    linear-gradient(#9cc8d4, #9cc8d4) 100% 21px / 1px 34px no-repeat,
    linear-gradient(#2a2a2c, #25282b 60%, #2c2726 80%, #202122);
}
```
